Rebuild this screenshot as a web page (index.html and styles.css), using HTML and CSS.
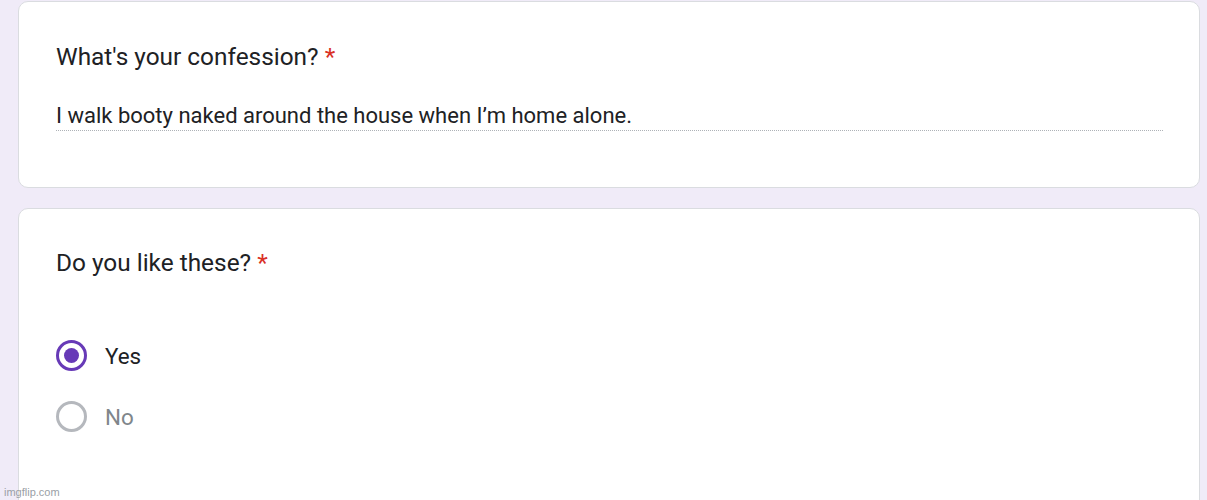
FILE: index.html
```html
<!DOCTYPE html>
<html>
<head>
<meta charset="utf-8">
<link rel="stylesheet" href="styles.css">
</head>
<body>
<div class="page">
  <div class="card card-text">
    <div class="question">What's your confession? <span class="req">*</span></div>
    <div class="answer">I walk booty naked around the house when I’m home alone.</div>
  </div>
  <div class="card card-choice">
    <div class="question">Do you like these? <span class="req">*</span></div>
    <div class="options">
      <div class="option">
        <span class="radio checked"><span class="dot"></span></span>
        <span class="label">Yes</span>
      </div>
      <div class="option">
        <span class="radio"></span>
        <span class="label muted">No</span>
      </div>
    </div>
  </div>
</div>
<div class="watermark">imgflip.com</div>
</body>
</html>
```
FILE: styles.css
```css
html, body {
  margin: 0;
  padding: 0;
  height: 100%;
  overflow: hidden;
}
body {
  background: #f0ebf8;
  font-family: Roboto, "Liberation Sans", sans-serif;
  color: #202124;
  position: relative;
}
.page {
  padding: 1px 7px 0 18px;
  display: flex;
  flex-direction: column;
  gap: 20px;
}
.card {
  background: #fff;
  border: 1px solid #dadce0;
  border-radius: 10px;
  padding: 0 36px 0 37px;
}
.question {
  font-size: 24.4px;
  line-height: 30px;
  color: #202124;
}
.req {
  color: #d93025;
}
.card-text {
  height: 187px;
  box-sizing: border-box;
  padding-top: 40px;
}
.answer {
  margin-top: 31px;
  font-size: 22px;
  line-height: 26px;
  padding-bottom: 1px;
  border-bottom: 1px dotted #aeb2b7;
}
.card-choice {
  padding-top: 39px;
  height: 320px;
  box-sizing: border-box;
}
.options {
  margin-top: 62px;
  display: flex;
  flex-direction: column;
  gap: 30px;
}
.option {
  display: flex;
  align-items: center;
  gap: 18px;
  height: 31px;
}
.radio {
  width: 31px;
  height: 31px;
  box-sizing: border-box;
  border-radius: 50%;
  border: 3px solid #b5b8bd;
  display: flex;
  align-items: center;
  justify-content: center;
}
.radio.checked {
  border-color: #673ab7;
}
.dot {
  width: 15px;
  height: 15px;
  border-radius: 50%;
  background: #673ab7;
}
.label {
  font-size: 22.4px;
  color: #202124;
}
.label.muted {
  color: #80868b;
}
.watermark {
  position: absolute;
  left: 4px;
  bottom: 2px;
  font-family: "Liberation Sans", Arial, sans-serif;
  font-size: 11px;
  color: #9aa0a6;
}
```
